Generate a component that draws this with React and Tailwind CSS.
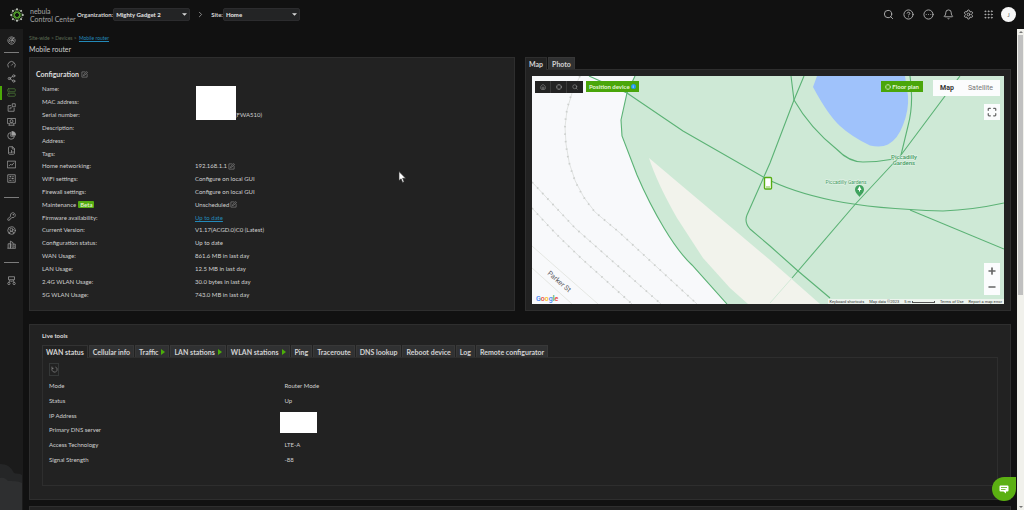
import {
  Bell, CircleHelp, CircleEllipsis, Search, Settings, Grip, Gauge, Share2, Server,
  FileChartColumn, KeyRound, CircleUserRound, Radar, RotateCcw, ChevronRight, House,
  Crosshair, Maximize, Plus, Minus,
} from 'lucide-react'

// small glyphs drawn on a 24 unit box, like the icon set
function Glyph({ className, children }) {
  return (
    <svg viewBox="0 0 24 24" fill="none" stroke="currentColor" strokeWidth="2" className={className}>
      {children}
    </svg>
  )
}

const AppsIcon = (props) => (
  <Glyph {...props}><path d="M11 7H3v15h16v-9M13 13h-5v4M14 2h8v8h-8z" /></Glyph>
)
const ClientsIcon = (props) => (
  <Glyph {...props}><path d="M5 17H1V4h22v13h-4M6 22v-3q0-3 3-3h6q3 0 3 3v3M4 22h16" /><circle cx="12" cy="11" r="4" /></Glyph>
)
const PieIcon = (props) => (
  <Glyph {...props}><path d="M10 4a9 9 0 1 0 10 10H10z" /><path d="M13 1v10h10A10 10 0 0 0 13 1z" fill="currentColor" /></Glyph>
)
const MonitorIcon = (props) => (
  <Glyph {...props}><path d="M1 3h22v18H1zM5 16l5-5 3 3 6-7" /></Glyph>
)
const ConfigureIcon = (props) => (
  <Glyph {...props}><path d="M2 2h20v20H2zM6 7h5M14 7h4M6 12h3M12 12h6M6 17h6M15 17h3M10 5v4M15 10v4" /></Glyph>
)
const SitesIcon = (props) => (
  <Glyph {...props}><path d="M3 22V10h6v12M9 22V3l7 4v15M16 11h6v11M1 22h22M12 10v2M12 15v2M19 15v3" /></Glyph>
)
const OrgIcon = (props) => (
  <Glyph {...props}><path d="M4 2h16v8H4zM8 10l-3 7M16 10l3 7M9 14h6" /><circle cx="5" cy="20" r="3" /><circle cx="19" cy="20" r="3" /></Glyph>
)
const EditIcon = (props) => (
  <Glyph {...props}><path d="M15 3H3v18h18V10" /><path d="M8 16l2-5L20 2l3 3-10 9z" /></Glyph>
)
const RefreshIcon = (props) => (
  <Glyph {...props}><path d="M15 3.500a9 9 0 1 1-10 3M3 2v6h6" /></Glyph>
)

const MAIN_NAV = [
  { name: 'Dashboard', icon: Gauge },
  { name: 'Topology', icon: Share2 },
  { name: 'Devices', icon: Server, active: true },
  { name: 'Applications', icon: AppsIcon },
  { name: 'Clients', icon: ClientsIcon },
  { name: 'Usage', icon: PieIcon },
  { name: 'Reports', icon: FileChartColumn },
  { name: 'Monitor', icon: MonitorIcon },
  { name: 'Configure', icon: ConfigureIcon },
]

const ORG_NAV = [
  { name: 'Licenses', icon: KeyRound },
  { name: 'Account', icon: CircleUserRound },
  { name: 'Sites', icon: SitesIcon },
]

const CONFIG_ROWS = [
  { label: 'Name:' },
  { label: 'MAC address:' },
  { label: 'Serial number:', masked: '(FWA510)' },
  { label: 'Description:' },
  { label: 'Address:' },
  { label: 'Tags:' },
  { label: 'Home networking:', value: '192.168.1.1', edit: true },
  { label: 'WiFi settings:', value: 'Configure on local GUI' },
  { label: 'Firewall settings:', value: 'Configure on local GUI' },
  { label: 'Maintenance', badge: 'Beta', value: 'Unscheduled', edit: true },
  { label: 'Firmware availability:', value: 'Up to date', link: true },
  { label: 'Current Version:', value: 'V1.17(ACGD.0)C0 (Latest)' },
  { label: 'Configuration status:', value: 'Up to date' },
  { label: 'WAN Usage:', value: '861.6 MB in last day' },
  { label: 'LAN Usage:', value: '12.5 MB in last day' },
  { label: '2.4G WLAN Usage:', value: '30.0 bytes in last day' },
  { label: '5G WLAN Usage:', value: '743.0 MB in last day' },
]

const TOOLS = [
  { name: 'WAN status', active: true },
  { name: 'Cellular info' },
  { name: 'Traffic', live: true },
  { name: 'LAN stations', live: true },
  { name: 'WLAN stations', live: true },
  { name: 'Ping' },
  { name: 'Traceroute' },
  { name: 'DNS lookup' },
  { name: 'Reboot device' },
  { name: 'Log' },
  { name: 'Remote configurator' },
]

const WAN_ROWS = [
  ['Mode', 'Router Mode'],
  ['Status', 'Up'],
  ['IP Address', ''],
  ['Primary DNS server', ''],
  ['Access Technology', 'LTE-A'],
  ['Signal Strength', '-88'],
]

function Logo() {
  return (
    <svg viewBox="0 0 28 28" className="size-[14px] shrink-0">
      {[0, 45, 90, 135, 180, 225, 270, 315].map((deg) => (
        <g key={deg} transform={`rotate(${deg} 14 14)`}>
          <path d="M14 9V4M11 7l3 3 3-3" fill="none" stroke="#5cb531" strokeWidth="1.6" />
          <circle cx="14" cy="2.4" r="2" fill="#c9cfc6" />
          <circle cx="18.4" cy="4.2" r="1.2" fill="#8f9a8b" />
        </g>
      ))}
    </svg>
  )
}

function Picker({ id, label, value }) {
  return (
    <div className="flex items-center">
      <label htmlFor={id} className="text-[6px] leading-[8px] font-bold text-[#d6d6d6]">{label}</label>
      <div className="relative flex">
        <select
          id={id}
          className="h-[13px] w-[77px] appearance-none rounded-[2px] border border-[#2c2c2e] bg-[#232425] pl-[2px] text-[6px] leading-[10px] font-bold text-[#e4e4e4]"
        >
          <option>{value}</option>
        </select>
        <svg viewBox="0 0 8 4" className="pointer-events-none absolute top-[5px] right-[3px] h-[3px] w-[5px]">
          <path d="M0 0h8L4 4z" fill="#d8d8d8" />
        </svg>
      </div>
    </div>
  )
}

function Header() {
  const tools = [
    ['Search', Search], ['Help', CircleHelp], ['More', CircleEllipsis],
    ['Notifications', Bell], ['Settings', Settings], ['Apps', Grip],
  ]
  return (
    <header className="flex h-[29px] shrink-0 items-center bg-[#111111] pr-2 pl-[10px]">
      <Logo />
      <div className="ml-[6px] w-[47px] text-[7px] leading-[8px] whitespace-nowrap text-[#a6a6a6]">
        <p>nebula</p>
        <p>Control Center</p>
      </div>
      <Picker id="org" label="Organization:" value="Mighty Gadget 2" />
      <ChevronRight className="mx-[6px] size-[9px] text-[#a8a8a8]" />
      <Picker id="site" label="Site:" value="Home" />
      <div className="ml-auto flex items-center gap-[9px]">
        {tools.map(([name, Icon]) => (
          <button key={name} aria-label={name} className="text-[#b4b4b4]">
            <Icon className="size-[11px]" strokeWidth={2} />
          </button>
        ))}
        <button className="-ml-[2px] size-[15px] rounded-full bg-[#f7f7f7] text-[6px] font-medium text-[#777]">J</button>
      </div>
    </header>
  )
}

function NavItem({ item }) {
  const Icon = item.icon
  return (
    <a
      href="#"
      aria-label={item.name}
      className={`flex items-center justify-center border-x-2 border-r-transparent ${
        item.active ? 'border-l-[#4caa08] text-[#4c7a38]' : 'border-l-transparent text-[#a2a2a2]'
      }`}
    >
      <Icon className="size-[9px]" />
    </a>
  )
}

function Sidebar() {
  return (
    <nav className="relative w-[23px] shrink-0 bg-[#1b1b1b] pt-1">
      <div className="grid h-[14px]"><NavItem item={{ name: 'Overview', icon: Radar }} /></div>
      <hr className="mx-1 mt-[5px] mb-[4px] border-[#7c7c7c]" />
      <div className="grid h-[129px] auto-rows-fr">
        {MAIN_NAV.map((item) => <NavItem key={item.name} item={item} />)}
      </div>
      <hr className="mx-1 my-[11px] border-[#7c7c7c]" />
      <div className="grid h-[43px] auto-rows-fr">
        {ORG_NAV.map((item) => <NavItem key={item.name} item={item} />)}
      </div>
      <hr className="mx-1 my-[10px] border-[#7c7c7c]" />
      <div className="grid h-[14px]"><NavItem item={{ name: 'Organization', icon: OrgIcon }} /></div>
      <svg viewBox="0 0 22 46" className="absolute bottom-0 left-0 h-[46px] w-[22px]">
        <path d="M0 0c7 0 11 3 14 9 2 1 6 0 8 2v35H0z" fill="#252627" />
        <path d="M0 14c4-1 6 1 8 3 5 0 10 0 14 2v27H0z" fill="#2e2f30" />
      </svg>
    </nav>
  )
}

function EditButton({ label }) {
  return (
    <button aria-label={label} className="text-[#929292]">
      <EditIcon className="size-[7px]" />
    </button>
  )
}

function Configuration() {
  return (
    <section className="relative flex flex-col border border-[#2e2e2e] bg-[#222222] px-[6px] pt-[12px] pb-[9px]">
      <h2 className="flex h-[8px] items-center gap-[2px] text-[7px] leading-[8px] font-bold text-[#dedede]">
        Configuration <EditButton label="Edit configuration" />
      </h2>
      <dl className="mt-[5px] grid flex-1 auto-rows-fr pl-[6px] text-[6px] leading-[8px] text-[#d0d0d0]">
        {CONFIG_ROWS.map((row) => (
          <div key={row.label} className="flex items-center">
            <dt className="flex w-[153px] items-center gap-[2px]">
              {row.label}
              {row.badge && (
                <span className="rounded-[1px] bg-[#55ad12] px-[2px] text-[6px] leading-[7px] font-semibold text-[#e2f2d4]">{row.badge}</span>
              )}
            </dt>
            <dd className="flex items-center gap-px">
              {row.link ? <a href="#" className="text-[#2389b8] underline">{row.value}</a> : row.value}
              {row.masked && <span className="pl-[40px]">{row.masked}</span>}
              {row.edit && <EditButton label={`Edit ${row.label}`} />}
            </dd>
          </div>
        ))}
      </dl>
      <div className="absolute top-[28px] left-[166px] h-[34px] w-[40px] bg-white" />
    </section>
  )
}

function MapDrawing() {
  return (
    <svg viewBox="0 0 472 228" preserveAspectRatio="xMidYMid slice" className="absolute inset-0 size-full">
      <rect width="472" height="228" fill="#f8f9fb" />
      <path d="M103 0L95 17 89 44 90 60 105 99Q117 127 132 152T160 189L195 228H472V0z" fill="#cee9d6" />
      <path d="M117 82L238 184 288 228H216L198 212 171 182 145 142Q125 107 117 82z" fill="#f2f3ec" />
      <path d="M285 0L281 11Q296 39 308 50T338 69.500Q349 72 356 68.500 366 63 371 49 377 34 376 20L373 0z" fill="#9fc2fb" />

      {/* tram lines */}
      <g fill="none" stroke="#d5d8d6" strokeWidth="0.700">
        <path d="M48 0Q29 34 34 68 38 108 63 136L88 157 165 228" />
        <path d="M0 106L43 152 129 228" />
        <path d="M0 132Q23 158 50 183L100 228" />
        <path d="M0 170L66 228M0 192L40 228" stroke="#dddfd8" />
      </g>
      <g fill="none" stroke="#cdd0ce" strokeWidth="1.800" strokeDasharray="1.500 6">
        <path d="M48 0Q29 34 34 68 38 108 63 136L88 157 165 228" />
        <path d="M0 106L43 152 129 228" />
        <path d="M0 132Q23 158 50 183L100 228" />
      </g>

      {/* footpaths */}
      <g fill="none" stroke="#5bb275" strokeWidth="1.100">
        <path d="M103 0L95 17 89 44 90 60 105 99Q117 127 132 152T160 189L195 228" />
        <path d="M57 0L95 17 151 55 233 102Q260 116 301 124.500T411 135Q440 134 472 127" />
        <path d="M272 0L262 24 238 87 215 139Q212 146 218 153L238 170 266 195 298 222" />
        <path d="M259 0L262 24Q278 52 305 73.500 317 86 331 86 346 86 362 83" />
        <path d="M378 0Q382 28 376 50L369 79" />
        <path d="M428 0L369 79 323 128.500 260 202" />
        <path d="M378 134L472 173" />
      </g>
      <path d="M260 202L238 227" stroke="#d3ead8" strokeWidth="1" />

      <g fontFamily="Roboto, sans-serif">
        <text x="15" y="198" fontSize="7" fill="#5c6064" transform="rotate(41 15 198)">Parker St</text>
        <g fontSize="5" fill="#3f9a60" stroke="#e6f4ea" strokeWidth="1" paintOrder="stroke">
          <text x="372" y="83" fontSize="6" textAnchor="middle" fontWeight="500">Piccadilly</text>
          <text x="372" y="89" fontSize="6" textAnchor="middle" fontWeight="500">Gardens</text>
          <text x="314" y="108" textAnchor="middle">Piccadilly Gardens</text>
        </g>
      </g>
      <path d="M327.500 121c-1-2-4.500-4-4.500-7.500a4.500 4.500 0 0 1 9 0c0 3.500-3.500 5.500-4.500 7.500z" fill="#3fa35e" />
      <path d="M327.500 110l2 4h-1.500v1.500h-1V114h-1.500z" fill="#fff" />
      <rect x="232.500" y="101.500" width="7" height="11.500" rx="1" fill="#fff" stroke="#55ad12" strokeWidth="1.400" />
      <path d="M234 111h4" stroke="#55ad12" strokeWidth="0.800" />
    </svg>
  )
}

function MapView() {
  return (
    <div className="relative h-[228px] overflow-hidden font-['Roboto',sans-serif]">
      <MapDrawing />
      <div className="absolute top-[5px] left-[3px] flex items-start gap-[3px]">
        <div className="flex divide-x divide-[#3a3a3a] bg-[#232323] text-[#a0a0a0]">
          {[['Home', House], ['Locate', Crosshair], ['Search map', Search]].map(([name, Icon]) => (
            <button key={name} aria-label={name} className="flex h-[12px] w-[16px] items-center justify-center">
              <Icon className="size-[6px]" />
            </button>
          ))}
        </div>
        <button className="flex h-[11px] items-center gap-px bg-[#4aa60a] px-[3px] font-['Lato',sans-serif] text-[6px] font-bold text-[#e6f5da]">
          Position device
          <span className="flex size-[5px] items-center justify-center rounded-full bg-[#2196f3] text-[4px] text-white">i</span>
        </button>
      </div>
      <button className="absolute top-[5px] right-[81px] flex h-[11px] items-center gap-px bg-[#4aa60a] px-[4px] font-['Lato',sans-serif] text-[6px] font-bold text-[#e6f5da]">
        <Crosshair className="size-[6px]" /> Floor plan
      </button>
      <div className="absolute top-[4px] right-[4px] flex h-[16px] w-[67px] items-center bg-[#fbfcfd] text-[7px]">
        <button className="w-[28px] font-bold text-[#333]">Map</button>
        <button className="flex-1 text-[#777]">Satellite</button>
      </div>
      <button aria-label="Full screen" className="absolute top-[28px] right-[4px] flex size-[16px] items-center justify-center bg-[#fbfcfd] text-[#666]">
        <Maximize className="size-[10px]" strokeWidth={3} />
      </button>
      <div className="absolute right-[4px] bottom-[9px] flex w-[16px] flex-col bg-[#fbfcfd] text-[#666]">
        <button aria-label="Zoom in" className="flex h-[16px] items-center justify-center"><Plus className="size-[10px]" strokeWidth={4} /></button>
        <button aria-label="Zoom out" className="flex h-[16px] items-center justify-center"><Minus className="size-[10px]" strokeWidth={4} /></button>
      </div>
      <p className="absolute bottom-0 left-[4px] text-[7px] leading-[10px] font-medium">
        <span className="text-[#4285f4]">G</span><span className="text-[#ea4335]">o</span><span className="text-[#fbbc05]">o</span>
        <span className="text-[#4285f4]">g</span><span className="text-[#34a853]">l</span><span className="text-[#ea4335]">e</span>
      </p>
      <div className="absolute right-0 bottom-0 flex h-[5px] items-center gap-[5px] bg-[#edf4ee] px-[2px] text-[4px] leading-[5px] whitespace-nowrap text-[#333]">
        <button>Keyboard shortcuts</button>
        <span>Map data ©2023</span>
        <span className="flex items-center gap-px">5 m <i className="h-[2px] w-[23px] border-x border-b border-[#555]" /></span>
        <a href="#">Terms of Use</a>
        <a href="#">Report a map error</a>
      </div>
    </div>
  )
}

function Location() {
  return (
    <section className="flex flex-col">
      <div role="tablist" className="flex h-[12px] gap-px text-[7px] leading-[12px] font-bold text-[#d2d2d2]">
        <button role="tab" aria-selected="true" className="relative z-10 -mb-px border border-b-0 border-[#2e2e2e] bg-[#222222] px-[3px]">Map</button>
        <button role="tab" aria-selected="false" className="border border-b-0 border-[#383838] bg-[#303132] px-[3px]">Photo</button>
      </div>
      <div className="flex-1 border border-[#2e2e2e] bg-[#222222] px-[6px] pt-[6px] pb-[6px]">
        <MapView />
      </div>
    </section>
  )
}

function LiveTools() {
  return (
    <section className="mt-[13px] border border-[#2e2e2e] bg-[#222222] px-[12px] pt-[7px] pb-[13px]">
      <h2 className="text-[6px] leading-[8px] font-bold text-[#dedede]">Live tools</h2>
      <div role="tablist" className="mt-[5px] flex h-[12px] gap-px text-[7px] leading-[12px] font-bold whitespace-nowrap text-[#d2d2d2]">
        {TOOLS.map((tool) => (
          <button
            key={tool.name}
            role="tab"
            aria-selected={!!tool.active}
            className={`flex items-center gap-[3px] border border-b-0 px-[3px] ${
              tool.active ? 'relative z-10 -mb-px border-[#333333] bg-[#222222]' : 'border-[#383838] bg-[#303132]'
            }`}
          >
            {tool.name}
            {tool.live && <svg viewBox="0 0 4 6" className="h-[6px] w-[4px]"><path d="M0 0l4 3-4 3z" fill="#4caf0a" /></svg>}
          </button>
        ))}
      </div>
      <div className="relative h-[129px] border border-[#2e2e2e] px-[6px] pt-[5px]">
        <button aria-label="Refresh" className="flex h-[13px] w-[10px] items-center justify-center border border-[#353838] text-[#9a9a9a]">
          <RefreshIcon className="size-[7px]" />
        </button>
        <dl className="mt-[3px] grid h-[88px] auto-rows-fr text-[6px] leading-[8px] text-[#d0d0d0]">
          {WAN_ROWS.map(([label, value]) => (
            <div key={label} className="flex items-center">
              <dt className="w-[25%]">{label}</dt>
              <dd>{value}</dd>
            </div>
          ))}
        </dl>
        <div className="absolute top-[54px] left-[25%] -ml-[2px] h-[21px] w-[37px] bg-white" />
      </div>
    </section>
  )
}

function ScrollRail() {
  return (
    <div aria-hidden="true" className="flex w-[7px] shrink-0 flex-col items-center bg-[#f1f1ec]">
      <svg viewBox="0 0 6 6" className="size-[6px]"><path d="M1 4h4L3 2z" fill="#777" /></svg>
      <div className="h-[54%] w-[5px] bg-[#c0c0c0]" />
      <svg viewBox="0 0 6 6" className="mt-auto size-[6px]"><path d="M1 2h4L3 4z" fill="#777" /></svg>
    </div>
  )
}

export default function App() {
  return (
    <div className="relative flex h-screen flex-col overflow-hidden bg-[#111111] font-['Lato',sans-serif]">
      <Header />
      <div className="flex min-h-0 flex-1">
        <Sidebar />
        <main className="min-w-0 flex-1 overflow-hidden pr-[6px] pl-[6px]">
          <div className="pt-[5px] text-[5px] leading-[8px] text-[#5c6b54]">
            Site-wide &gt; Devices &gt; <a href="#" className="ml-px text-[#2389b8] underline">Mobile router</a>
          </div>
          <h1 className="mt-[3px] text-[7px] leading-[9px] text-[#cfcfcf]">Mobile router</h1>
          <div className="mt-[3px] grid grid-cols-2 gap-[10px]">
            <Configuration />
            <Location />
          </div>
          <LiveTools />
          <section className="mt-[6px] h-[40px] border border-[#2e2e2e] bg-[#222222]" />
        </main>
        <ScrollRail />
      </div>

      <button aria-label="Open chat" className="absolute right-[8px] bottom-[9px] flex size-[24px] items-center justify-center rounded-full rounded-tr-[3px] bg-[#5bb012]">
        <svg viewBox="0 0 20 18" className="h-[9px] w-[10px]">
          <path d="M3 1h14q2 0 2 2v8q0 2-2 2h-3v4l-5-4H3q-2 0-2-2V3q0-2 2-2z" fill="#fff" />
          <path d="M4 5h12M4 9h9" stroke="#5bb012" strokeWidth="1.600" />
        </svg>
      </button>
      <svg viewBox="0 0 12 20" className="absolute top-[171px] left-[398px] h-[12px] w-[8px]">
        <path d="M1 1v15l3.500-3 2.500 6 2.500-1-2.500-6H12z" fill="#fff" stroke="#333" />
      </svg>
    </div>
  )
}
